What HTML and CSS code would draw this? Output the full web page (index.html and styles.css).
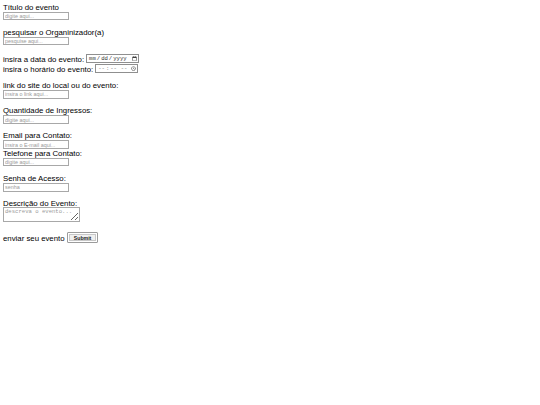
FILE: index.html
```html
<!DOCTYPE html>
<html lang="pt">
<head>
<meta charset="utf-8">
<title>Evento</title>
<link rel="stylesheet" href="styles.css">
</head>
<body>
<form class="form">
  <div class="group">
    <label class="lbl">Título do evento</label>
    <input class="field" type="text" placeholder="digite aqui...">
  </div>
  <div class="group">
    <label class="lbl">pesquisar o Organinizador(a)</label>
    <input class="field" type="search" placeholder="pesquise aqui...">
  </div>
  <div class="rows">
    <div class="row">
      <label class="lbl">insira a data do evento:</label>
      <input class="picker date" type="date">
    </div>
    <div class="row">
      <label class="lbl">insira o horário do evento:</label>
      <input class="picker time" type="time">
    </div>
  </div>
  <div class="group">
    <label class="lbl">link do site do local ou do evento:</label>
    <input class="field" type="url" placeholder="insira o link aqui...">
  </div>
  <div class="group">
    <label class="lbl">Quantidade de Ingressos:</label>
    <input class="field" type="text" placeholder="digite aqui...">
  </div>
  <div class="group tight">
    <label class="lbl">Email para Contato:</label>
    <input class="field" type="email" placeholder="insira o E-mail aqui...">
  </div>
  <div class="group">
    <label class="lbl">Telefone para Contato:</label>
    <input class="field" type="tel" placeholder="digite aqui...">
  </div>
  <div class="group">
    <label class="lbl">Senha de Acesso:</label>
    <input class="field" type="password" placeholder="senha">
  </div>
  <div class="group area-group">
    <label class="lbl">Descrição do Evento:</label>
    <textarea class="area" placeholder="descreva o evento..."></textarea>
  </div>
  <div class="send">
    <label class="lbl">enviar seu evento</label>
    <input class="submit" type="submit" value="Submit">
  </div>
</form>
</body>
</html>
```
FILE: styles.css
```css
html, body {
  margin: 0;
  padding: 0;
  background: #fff;
}
body {
  font-family: "Liberation Sans", Arial, sans-serif;
  font-size: 7.8px;
  color: #000;
}
.form {
  padding: 2.5px 3px 0 3px;
  display: flex;
  flex-direction: column;
  align-items: flex-start;
}
.lbl {
  display: block;
  line-height: 10px;
  height: 8px;
  white-space: nowrap;
}
.group {
  display: flex;
  flex-direction: column;
  align-items: flex-start;
  margin-bottom: 7.7px;
}
.group.tight {
  margin-bottom: 0;
}
.field {
  box-sizing: border-box;
  margin: 1px 0 0 0;
  width: 66px;
  height: 8.5px;
  padding: 0 1px;
  border: 1px solid #a8a8a8;
  font-family: "Liberation Sans", Arial, sans-serif;
  font-size: 5.4px;
  line-height: 6px;
  color: #333;
  background: #fff;
  outline: none;
}
.field::placeholder {
  color: #9a9a9a;
}
.rows {
  margin-top: 1px;
  margin-bottom: 7.2px;
  display: flex;
  flex-direction: column;
  align-items: flex-start;
}
.row {
  display: flex;
  align-items: center;
  gap: 2px;
  height: 10px;
}
.row .lbl {
  margin-top: 0;
}
.picker {
  box-sizing: border-box;
  margin: 0;
  height: 9px;
  padding: 0 1px;
  border: 1px solid #8f8f8f;
  font-family: "Liberation Mono", "DejaVu Sans Mono", monospace;
  font-size: 5.6px;
  color: #333;
  background: #fff;
}
.picker::-webkit-calendar-picker-indicator {
  width: 5px;
  height: 5px;
  padding: 0;
  margin: 0 0 0 1px;
}
.picker::-webkit-datetime-edit {
  padding: 0;
}
.date {
  width: 53px;
}
.time {
  width: 43px;
  color: #777;
}
.area-group {
  margin-bottom: 0;
}
.area {
  box-sizing: border-box;
  margin: 0;
  width: 77px;
  height: 14.5px;
  padding: 1px 1px;
  border: 1px solid #a8a8a8;
  font-family: "Liberation Mono", "DejaVu Sans Mono", monospace;
  font-size: 5.6px;
  line-height: 6px;
  resize: both;
}
.area::placeholder {
  color: #9a9a9a;
}
.send {
  display: flex;
  align-items: center;
  gap: 2.5px;
  margin-top: 10.5px;
  height: 11px;
}
.send .lbl {
  margin-top: 1px;
}
.submit {
  box-sizing: border-box;
  margin: 0;
  width: 31px;
  height: 11px;
  padding: 0;
  border: 1px solid #9c9c9c;
  border-radius: 1px;
  background: #f0f0f0;
  box-shadow: inset 0 0 0 1px #fff, inset 0 0 0 2px #c8c8c8;
  font-family: "Liberation Sans", Arial, sans-serif;
  font-size: 5.2px;
  font-weight: bold;
  color: #222;
}
```
